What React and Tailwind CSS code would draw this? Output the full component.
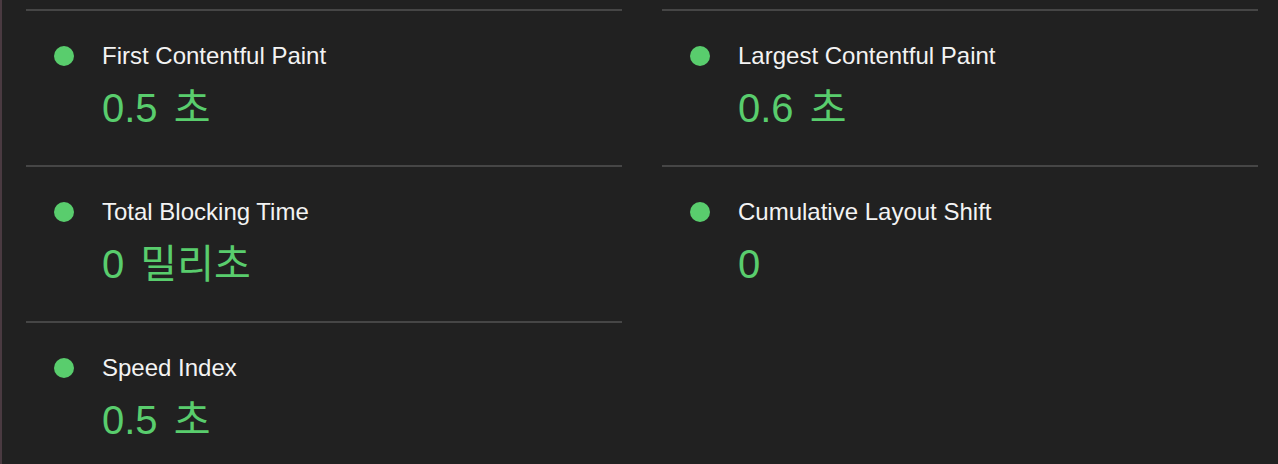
import React from 'react';

const metrics = [
  { title: 'First Contentful Paint', value: '0.5 초' },
  { title: 'Largest Contentful Paint', value: '0.6 초' },
  { title: 'Total Blocking Time', value: '0 밀리초' },
  { title: 'Cumulative Layout Shift', value: '0' },
  { title: 'Speed Index', value: '0.5 초' },
];

const Metric = ({ title, value }) => (
  <div className="h-[156px] border-t-2 border-[#464646]">
    <div className="flex pt-[30px]">
      <div className="w-[76px] flex items-center h-[30px] pl-[28px]">
        <span className="block w-[20px] h-[20px] rounded-full bg-[#59cd6d]" />
      </div>
      <div className="flex flex-col">
        <p className="text-[24px] leading-[30px] text-[#f3f3f3]">{title}</p>
        <p className="mt-[13px] text-[40px] leading-[48px] text-[#59cd6d] [word-spacing:5px]">{value}</p>
      </div>
    </div>
  </div>
);

export default function App() {
  return (
    <div
      className="w-[1278px] h-[464px] overflow-hidden bg-[#212121] border-l-2 border-[#4a3a41]"
      style={{ fontFamily: '"Liberation Sans", Arial, "Noto Sans CJK KR", sans-serif' }}
    >
      <div className="grid grid-cols-[596px_596px] gap-x-[40px] pl-[24px] pt-[9px]">
        {metrics.map((m) => (
          <Metric key={m.title} title={m.title} value={m.value} />
        ))}
      </div>
    </div>
  );
}
